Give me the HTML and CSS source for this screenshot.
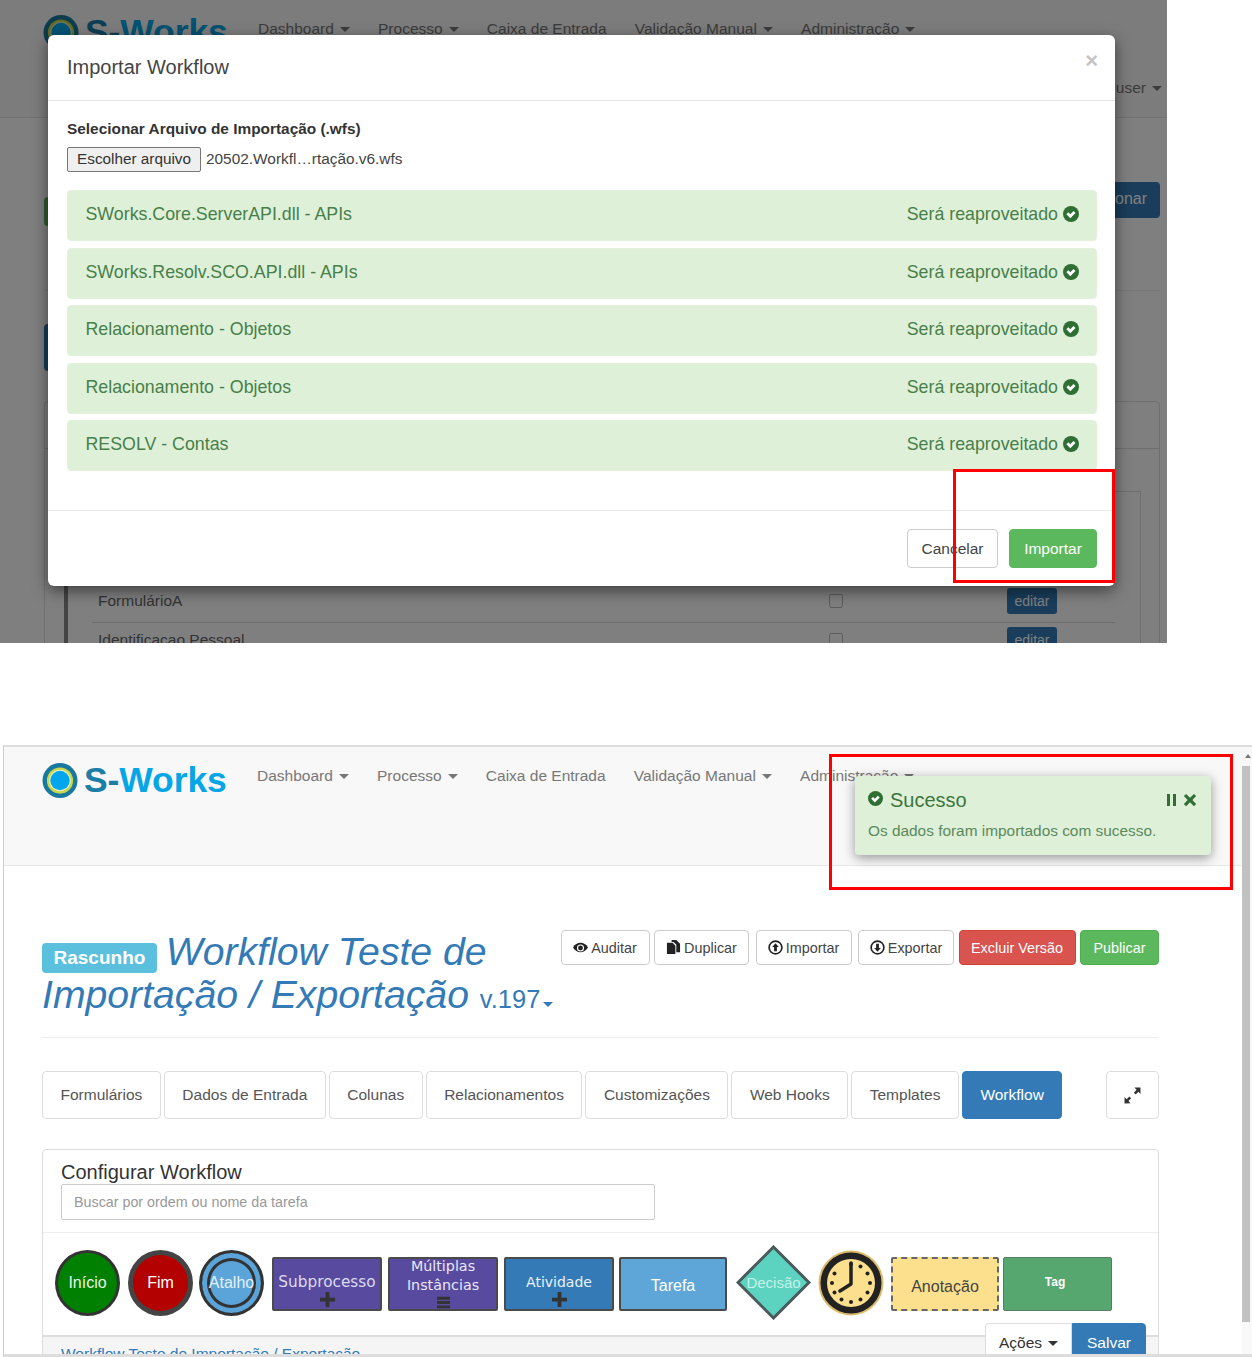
FILE: index.html
```html
<!DOCTYPE html>
<html lang="pt-BR">
<head>
<meta charset="utf-8">
<title>Importar Workflow</title>
<link rel="stylesheet" href="styles.css">
</head>
<body>
<svg class="defs" width="0" height="0" aria-hidden="true">
  <symbol id="i-ok" viewBox="0 0 16 16"><circle cx="8" cy="8" r="8" fill="currentColor"/><path d="M3.400 8.300l2-2 1.900 1.900 3.200-3.200 2 2-5.200 5.200z" fill="#fff"/></symbol>
  <symbol id="i-logo" viewBox="0 0 36 36"><circle cx="18" cy="18" r="18" fill="#17799f"/><circle cx="18" cy="18" r="13.500" fill="#c9d84a"/><circle cx="18" cy="18" r="11" fill="#e8f3c8"/><circle cx="18" cy="18" r="10" fill="#02a6ec"/></symbol>
  <symbol id="i-eye" viewBox="0 0 16 16"><path d="M0 8c2-3.400 4.800-5 8-5s6 1.600 8 5c-2 3.400-4.800 5-8 5S2 11.400 0 8z" fill="#222"/><circle cx="8" cy="8.500" r="3.800" fill="#fff"/><circle cx="8" cy="8.500" r="2.600" fill="#222"/></symbol>
  <symbol id="i-dup" viewBox="0 0 16 16"><path d="M1 3h6l3 3v9H1z" fill="#222"/><path d="M6 0h5l4 4v9h-4V5L8 2H6z" fill="#222"/></symbol>
  <symbol id="i-up" viewBox="0 0 16 16"><circle cx="8" cy="8" r="6.800" fill="none" stroke="#222" stroke-width="1.800"/><path d="M8 3.500l3.500 4H9.500v4.500h-3V7.500H4.500z" fill="#222"/></symbol>
  <symbol id="i-down" viewBox="0 0 16 16"><circle cx="8" cy="8" r="6.800" fill="none" stroke="#222" stroke-width="1.800"/><path d="M8 12.500l3.500-4H9.500V4h-3v4.500H4.500z" fill="#222"/></symbol>
  <symbol id="i-expand" viewBox="0 0 16 16"><path d="M15.500 .5v6l-2-2-2.500 2.500-1.700-1.700L11.800 2.500l-2-2zM.5 15.500v-6l2 2L5 9l1.700 1.700-2.500 2.500 2 2z" fill="#333"/></symbol>
  <symbol id="i-plus" viewBox="0 0 16 16"><path d="M6 0h4v6h6v4h-6v6H6v-6H0V6h6z" fill="#333"/></symbol>
  <symbol id="i-bars" viewBox="0 0 16 16"><path d="M0 1h16v3.500H0zM0 6.300h16v3.500H0zM0 11.600h16v3.500H0z" fill="#333"/></symbol>
  <symbol id="i-x" viewBox="0 0 16 16"><path d="M3.500 1L8 5.300 12.500 1 15 3.500 10.700 8l4.300 4.500-2.500 2.500L8 10.700 3.500 15 1 12.500 5.300 8 1 3.500z" fill="currentColor"/></symbol>
</svg>

<section class="shot-top">
  <div class="under">
    <nav class="nav nav-top">
      <a class="brand"><svg class="logo"><use href="#i-logo"/></svg><span class="brand-text"><span class="brand-s">S-</span>Works</span></a>
      <ul class="menu">
        <li>Dashboard<i class="caret"></i></li>
        <li>Processo<i class="caret"></i></li>
        <li>Caixa de Entrada</li>
        <li>Validação Manual<i class="caret"></i></li>
        <li>Administração<i class="caret"></i></li>
      </ul>
      <span class="nav-user">user<i class="caret"></i></span>
    </nav>
    <div class="under-content">
      <div class="under-row">
        <span class="under-green">Ativo</span>
        <span class="under-add">Adicionar</span>
      </div>
      <div class="under-sep"></div>
      <div class="under-blue">Novo</div>
      <div class="under-panel">
        <div class="under-panel-head"></div>
        <div class="under-inner">
          <div class="under-list">
            <div class="under-item"><span>FormulárioA</span><i class="chk"></i><b class="edit">editar</b></div>
            <div class="under-item"><span>Identificacao Pessoal</span><i class="chk"></i><b class="edit">editar</b></div>
          </div>
        </div>
      </div>
    </div>
  </div>
  <div class="backdrop"></div>
  <div class="modal">
    <header class="modal-head">
      <h4 class="modal-title">Importar Workflow</h4>
      <span class="modal-close">×</span>
    </header>
    <div class="modal-body">
      <label class="file-label">Selecionar Arquivo de Importação (.wfs)</label>
      <div class="file-row"><button class="file-btn">Escolher arquivo</button><span class="file-name">20502.Workfl…rtação.v6.wfs</span></div>
      <ul class="alerts">
        <li class="alert"><span>SWorks.Core.ServerAPI.dll - APIs</span><span class="alert-state">Será reaproveitado <svg class="ok"><use href="#i-ok"/></svg></span></li>
        <li class="alert"><span>SWorks.Resolv.SCO.API.dll - APIs</span><span class="alert-state">Será reaproveitado <svg class="ok"><use href="#i-ok"/></svg></span></li>
        <li class="alert"><span>Relacionamento - Objetos</span><span class="alert-state">Será reaproveitado <svg class="ok"><use href="#i-ok"/></svg></span></li>
        <li class="alert"><span>Relacionamento - Objetos</span><span class="alert-state">Será reaproveitado <svg class="ok"><use href="#i-ok"/></svg></span></li>
        <li class="alert"><span>RESOLV - Contas</span><span class="alert-state">Será reaproveitado <svg class="ok"><use href="#i-ok"/></svg></span></li>
      </ul>
    </div>
    <footer class="modal-foot">
      <button class="mbtn mbtn-cancel">Cancelar</button>
      <button class="mbtn mbtn-ok">Importar</button>
    </footer>
  </div>
  <div class="mark mark-top"></div>
</section>

<section class="shot-bottom">
  <div class="main">
    <nav class="nav">
      <a class="brand"><svg class="logo"><use href="#i-logo"/></svg><span class="brand-text"><span class="brand-s">S-</span>Works</span></a>
      <ul class="menu">
        <li>Dashboard<i class="caret"></i></li>
        <li>Processo<i class="caret"></i></li>
        <li>Caixa de Entrada</li>
        <li>Validação Manual<i class="caret"></i></li>
        <li>Administração<i class="caret"></i></li>
      </ul>
    </nav>
    <div class="content">
      <div class="page-head">
        <h1 class="title"><span class="badge">Rascunho</span> Workflow Teste de Importação / Exportação <small class="version">v.197<i class="caret caret-blue"></i></small></h1>
        <div class="actions">
          <button class="btn btn-w-a"><svg class="ic"><use href="#i-eye"/></svg>Auditar</button>
          <button class="btn btn-w-b"><svg class="ic"><use href="#i-dup"/></svg>Duplicar</button>
          <button class="btn btn-w-c"><svg class="ic"><use href="#i-up"/></svg>Importar</button>
          <button class="btn btn-w-d"><svg class="ic"><use href="#i-down"/></svg>Exportar</button>
          <button class="btn btn-danger">Excluir Versão</button>
          <button class="btn btn-success">Publicar</button>
        </div>
      </div>
      <div class="tabs">
        <a class="tab">Formulários</a>
        <a class="tab">Dados de Entrada</a>
        <a class="tab">Colunas</a>
        <a class="tab">Relacionamentos</a>
        <a class="tab">Customizações</a>
        <a class="tab">Web Hooks</a>
        <a class="tab">Templates</a>
        <a class="tab tab-active">Workflow</a>
        <a class="tab tab-expand"><svg class="ic-expand"><use href="#i-expand"/></svg></a>
      </div>
      <div class="panel">
        <div class="panel-head">
          <h3 class="panel-title">Configurar Workflow</h3>
          <input class="search" type="text" placeholder="Buscar por ordem ou nome da tarefa">
        </div>
        <div class="palette">
          <div class="node circle start">Início</div>
          <div class="node circle end">Fim</div>
          <div class="node circle shortcut">Atalho</div>
          <div class="node box sub"><span class="box-label">Subprocesso</span><svg class="box-ic"><use href="#i-plus"/></svg></div>
          <div class="node box multi"><span class="box-label">Múltiplas<br>Instâncias</span><svg class="box-ic"><use href="#i-bars"/></svg></div>
          <div class="node box activity"><span class="box-label">Atividade</span><svg class="box-ic"><use href="#i-plus"/></svg></div>
          <div class="node box task">Tarefa</div>
          <div class="node diamond">
            <svg class="diamond-bg" viewBox="0 0 75 75"><polygon points="37.500,2 73,37.500 37.500,73 2,37.500" fill="#5cd3c0" stroke="#4a5a5a" stroke-width="3"/></svg>
            <span class="diamond-label">Decisão</span>
          </div>
          <svg class="clock" viewBox="0 0 66 66">
            <circle cx="33" cy="33" r="32.500" fill="#d9bb6a"/>
            <circle cx="33" cy="33" r="30.500" fill="#222"/>
            <circle cx="33" cy="33" r="24" fill="#fde08e"/>
            <g fill="#222"><circle cx="33" cy="14" r="2"/><circle cx="42.500" cy="16.500" r="2"/><circle cx="49.500" cy="23.500" r="2"/><circle cx="52" cy="33" r="2"/><circle cx="49.500" cy="42.500" r="2"/><circle cx="42.500" cy="49.500" r="2"/><circle cx="33" cy="52" r="2"/><circle cx="23.500" cy="49.500" r="2"/><circle cx="16.500" cy="42.500" r="2"/><circle cx="14" cy="33" r="2"/><circle cx="16.500" cy="23.500" r="2"/></g>
            <path d="M33 13v21L22 41" fill="none" stroke="#222" stroke-width="3.500" stroke-linecap="round" stroke-linejoin="round"/>
          </svg>
          <div class="node box note">Anotação</div>
          <div class="node box tag"><span>Tag</span></div>
        </div>
        <div class="panel-foot"><a class="crumb">Workflow Teste de Importação / Exportação</a></div>
      </div>
    </div>
    <div class="save-group"><button class="sg sg-a">Ações<i class="caret caret-dark"></i></button><button class="sg sg-s">Salvar</button></div>
  </div>
  <div class="scrollbar"><i class="sb-arrow"></i><i class="sb-thumb"></i></div>
  <div class="toast">
    <div class="toast-head">
      <svg class="toast-ok"><use href="#i-ok"/></svg><span class="toast-title">Sucesso</span>
      <span class="toast-tools"><i class="pause"></i><svg class="toast-x"><use href="#i-x"/></svg></span>
    </div>
    <p class="toast-msg">Os dados foram importados com sucesso.</p>
  </div>
  <div class="mark mark-bottom"></div>
</section>
</body>
</html>
```

FILE: styles.css
```css
* { box-sizing: border-box; }
html, body { margin: 0; padding: 0; background: #fff; }
body { width: 1252px; height: 1357px; overflow: hidden; font-family: "Liberation Sans", Arial, sans-serif; font-size: 16px; color: #333; }
ul { list-style: none; margin: 0; padding: 0; }
button { font-family: inherit; }
.defs { position: absolute; }

/* top screenshot */
.shot-top { position: relative; width: 1167px; height: 643px; overflow: hidden; background: #fff; }
.under { height: 643px; }
.backdrop { position: absolute; inset: 0; background: rgba(0, 0, 0, .5); }

/* nav */
.nav { display: flex; align-items: flex-start; height: 119px; padding: 16px 0 0 38px; background: #f8f8f8; border-bottom: 1px solid #e7e7e7; }
.nav-top { height: 118px; padding: 15px 5px 0 43px; }
.brand { display: flex; align-items: center; width: 215px; flex: none; }
.logo { width: 36px; height: 35px; }
.brand-text { margin-left: 6px; font-size: 35.500px; font-weight: 700; line-height: 35px; color: #05a5e6; letter-spacing: -.1px; }
.brand-s { color: #1b7ea6; }
.menu { display: flex; gap: 28.200px; margin-top: 4px; font-size: 15.500px; line-height: 18px; color: #777; }
.nav-top .menu { margin-top: 5px; }
.menu li { white-space: nowrap; }
.caret { display: inline-block; width: 0; height: 0; margin-left: 6px; vertical-align: 2px; border-top: 5px solid #777; border-left: 5px solid transparent; border-right: 5px solid transparent; }
.nav-user { margin-left: auto; margin-top: 64px; font-size: 15.500px; line-height: 18px; color: #777; white-space: nowrap; }

/* under modal */
.under-content { padding: 64px 7px 0 44px; }
.under-row { display: flex; justify-content: space-between; align-items: flex-start; height: 108px; }
.under-green { margin-top: 15px; height: 29px; padding: 0 14px; background: #5cb85c; border-radius: 4px; color: #fff; font-size: 14px; line-height: 29px; }
.under-add { height: 36px; padding: 0 13px; background: #337ab7; border-radius: 4px; color: #fff; font-size: 16px; line-height: 34px; }
.under-sep { border-bottom: 1px solid #eee; }
.under-blue { width: 60px; height: 47px; margin-top: 33px; background: #337ab7; border-radius: 4px; color: #fff; font-size: 14px; line-height: 47px; text-align: center; }
.under-panel { margin-top: 30px; height: 300px; border: 1px solid #ddd; border-radius: 4px; padding: 0 18px 0 19px; }
.under-panel-head { height: 47px; margin: 0 -18px 0 -19px; border-bottom: 1px solid #ddd; }
.under-inner { margin-top: 42px; height: 250px; border: 1px solid #ddd; border-left: 4px solid #888; padding: 92px 25px 0 24px; }
.under-item { display: grid; grid-template-columns: 731px 178px 50px; align-items: center; height: 39px; padding: 0 0 4px 6px; border-bottom: 1px solid #ddd; font-size: 15.500px; color: #666; }
.chk { width: 14px; height: 14px; border: 1px solid #bbb; border-radius: 2px; }
.edit { height: 26px; background: #337ab7; border-radius: 3px; color: #fff; font-weight: 400; font-size: 14px; line-height: 26px; text-align: center; }

/* modal */
.modal { position: absolute; left: 48px; top: 35px; width: 1067px; height: 551px; background: #fff; border-radius: 6px; box-shadow: 0 5px 15px rgba(0, 0, 0, .5); }
.modal-head { display: flex; justify-content: space-between; height: 66px; padding: 19px 17px 0 19px; border-bottom: 1px solid #e5e5e5; }
.modal-title { margin: 0; font-size: 20px; font-weight: 400; line-height: 26px; color: #444; }
.modal-close { margin-top: -4px; font-size: 22px; line-height: 22px; font-weight: 700; color: #c4c4c4; }
.modal-body { height: 410px; padding: 20px 18px 0 19px; border-bottom: 1px solid #e5e5e5; }
.file-label { display: block; font-size: 15.400px; font-weight: 700; line-height: 16px; color: #333; }
.file-row { display: flex; align-items: center; margin-top: 9.500px; font-size: 15.400px; }
.file-btn { height: 25px; width: 134px; padding: 0; background: #efefef; border: 1px solid #767676; border-radius: 2px; font-size: 15.300px; color: #333; }
.file-name { margin-left: 5px; color: #444; }
.alerts { display: flex; flex-direction: column; gap: 6.500px; margin-top: 18.500px; }
.alert { display: flex; justify-content: space-between; align-items: center; height: 51px; padding: 0 17px 2px 17.500px; background: #dff0d8; border: 1px solid #e3f0dc; border-radius: 4px; font-size: 17.800px; color: #47804a; }
.alert-state { display: flex; align-items: center; gap: 5px; }
.ok { width: 16px; height: 16px; margin-top: -1px; color: #2f6f33; }
.modal-foot { display: flex; justify-content: flex-end; gap: 11px; padding: 18px 18px 0 0; }
.mbtn { height: 39px; border-radius: 4px; font-size: 15.500px; }
.mbtn-cancel { width: 91px; background: #fff; border: 1px solid #ccc; color: #444; }
.mbtn-ok { width: 88px; background: #5cb85c; border: 1px solid #5cb85c; color: #fff; }
.mark { position: absolute; border: 3px solid #f00; }
.mark-top { left: 953px; top: 469px; width: 162px; height: 114px; }

/* bottom screenshot */
.shot-bottom { position: relative; display: flex; width: 1249px; height: 612px; margin: 102px 0 0 3px; border-top: 2px solid #ddd; border-bottom: 3px solid #ddd; border-left: 1px solid #ccc; overflow: hidden; }
.main { position: relative; flex: 1; min-width: 0; overflow: hidden; }
.content { width: 1155px; padding: 64px 0 0 38px; }
.page-head { display: flex; justify-content: space-between; height: 108px; border-bottom: 1px solid #eee; }
.title { width: 515px; margin: 0; font-size: 39.200px; font-style: italic; font-weight: 400; line-height: 43px; color: #337ab7; }
.badge { display: inline-block; height: 30px; margin-right: -2px; padding: 0 11.500px; background: #5bc0de; border-radius: 4px; color: #fff; font-size: 19px; font-style: normal; font-weight: 700; line-height: 29px; vertical-align: 1px; }
.version { font-size: 25.500px; font-style: normal; }
.caret-blue { margin-left: 3px; border-top-color: #337ab7; vertical-align: 1px; }
.actions { display: flex; gap: 4.500px; flex: none; height: 35px; }
.btn { display: flex; align-items: center; justify-content: center; height: 35px; padding: 0; background: #fff; border: 1px solid #ccc; border-radius: 4px; font-size: 14.400px; color: #444; }
.btn-w-a { width: 89px; }
.btn-w-b { width: 95px; }
.btn-w-c { width: 96px; margin-left: 2px; }
.btn-w-d { width: 96px; margin-left: 2px; }
.btn-danger { width: 117px; background: #d9534f; border-color: #d43f3a; color: #fff; }
.btn-success { width: 79px; background: #5cb85c; border-color: #4cae4c; color: #fff; }
.ic { width: 15px; height: 15px; margin-right: 3px; }
.tabs { display: flex; gap: 3px; height: 48px; margin-top: 33px; }
.tab { display: flex; align-items: center; padding: 0 17.500px; height: 48px; border: 1px solid #ddd; border-radius: 4px; color: #555; font-size: 15.500px; white-space: nowrap; }
.tab-active { background: #337ab7; border-color: #337ab7; color: #fff; }
.tab-expand { margin-left: auto; width: 53px; padding: 0; justify-content: center; }
.ic-expand { width: 17px; height: 17px; }
.panel { margin-top: 30px; height: 250px; border: 1px solid #ddd; border-radius: 4px; }
.panel-head { height: 83px; padding: 11px 18px 0 18px; border-bottom: 1px solid #eee; }
.panel-title { margin: 0; font-size: 20px; font-weight: 400; line-height: 23px; color: #333; }
.search { display: block; width: 594px; height: 36px; padding: 0 12px; border: 1px solid #ccc; border-radius: 2px; font-family: inherit; font-size: 14.300px; color: #555; }
.search::placeholder { color: #999; opacity: 1; }
.palette { display: flex; align-items: center; gap: 6px; height: 102px; padding: 0 0 3px 12px; }
.node { display: flex; align-items: center; justify-content: center; flex: none; text-align: center; color: #fff; font-size: 16px; white-space: nowrap; }
.circle { width: 65px; height: 66px; border-radius: 50%; border: 3px solid #333; }
.start { background: #008000; color: #e8f5e8; }
.end { margin-left: 2px; background: #b30000; border: 5px solid #444; }
.shortcut { background: #5ba4d9; box-shadow: inset 0 0 0 5px #5ba4d9, inset 0 0 0 8px #333; color: #e4f1fa; }
.box { flex-direction: column; justify-content: flex-start; width: 110px; height: 54px; margin-top: 2px; border: 2px solid #4a4a4a; border-radius: 2px; }
.box-label { font-family: "DejaVu Sans", sans-serif; font-size: 15.300px; line-height: 19px; color: #dcdcf0; }
.box-ic { width: 15px; height: 15px; margin-top: 0; }
.sub { margin-left: 2px; padding-top: 14px; background: #584a9e; }
.multi { padding-top: 0; background: #584a9e; }
.multi .box-label { margin-top: -2px; font-size: 14.300px; color: #e8e8f8; }
.multi .box-ic { margin-top: 1px; }
.activity { padding-top: 14px; background: #337ab7; }
.activity .box-label { color: #eaf2f8; font-size: 14px; }
.task { justify-content: center; width: 108px; margin-left: -1px; padding-top: 5px; background: #5fa6d8; }
.diamond { display: grid; width: 75px; height: 75px; margin-left: 3px; }
.diamond-bg, .diamond-label { grid-area: 1 / 1; }
.diamond-bg { width: 75px; height: 75px; }
.diamond-label { align-self: center; color: #c4f2e8; font-size: 15px; }
.clock { flex: none; width: 66px; height: 66px; margin-left: 1px; }
.note { justify-content: center; width: 108px; margin-left: 1px; padding-top: 7px; background: #fde08e; border: 2px dashed #666; color: #444; }
.tag { width: 109px; margin-left: -2px; padding: 17px 5px 0 0; background: #55a66f; border: 1px solid #5a7a65; font-size: 12px; font-weight: 700; }
.panel-foot { height: 64px; padding: 8px 18px; background: #f5f5f5; border-top: 2px solid #ddd; }
.crumb { font-size: 15.500px; line-height: 16px; color: #337ab7; }
.save-group { position: absolute; left: 981px; top: 576px; display: flex; }
.sg { height: 40px; font-size: 15.500px; border: 1px solid #ddd; }
.sg-a { width: 87px; background: #fff; border-radius: 4px 0 0 0; color: #333; }
.sg-s { width: 74px; background: #337ab7; border-color: #337ab7; border-radius: 0 4px 0 0; color: #fff; }
.caret-dark { border-top-color: #333; }

.scrollbar { display: flex; flex-direction: column; align-items: flex-start; flex: none; width: 10px; padding-right: 2px; background: #f8f8f8; }
.sb-arrow { margin: 7px 0 0 3px; width: 0; height: 0; border-bottom: 4px solid #777; border-left: 3px solid transparent; border-right: 3px solid transparent; }
.sb-thumb { width: 8px; height: 556px; margin-top: 8px; background: #c1c1c1; }

/* toast */
.toast { position: absolute; left: 851px; top: 29px; width: 356px; height: 79px; padding: 13px 14px 13px 13px; background: #dff0d8; border-radius: 4px; box-shadow: 0 3px 12px rgba(0, 0, 0, .4); color: #3c763d; }
.toast-head { display: flex; align-items: center; height: 22px; }
.toast-ok { width: 15px; height: 15px; margin-top: -3px; color: #2f6f33; }
.toast-title { margin-left: 7px; font-size: 20px; line-height: 22px; }
.toast-tools { display: flex; align-items: center; gap: 7px; margin-left: auto; }
.pause { width: 9px; height: 12px; border-left: 3.500px solid #2f6f33; border-right: 3.500px solid #2f6f33; }
.toast-x { width: 14px; height: 14px; color: #2f6f33; }
.toast-msg { margin: 11px 0 0; font-size: 15.400px; line-height: 18px; color: #5a8a5c; white-space: nowrap; }
.mark-bottom { left: 825px; top: 7px; width: 404px; height: 136px; }
```
